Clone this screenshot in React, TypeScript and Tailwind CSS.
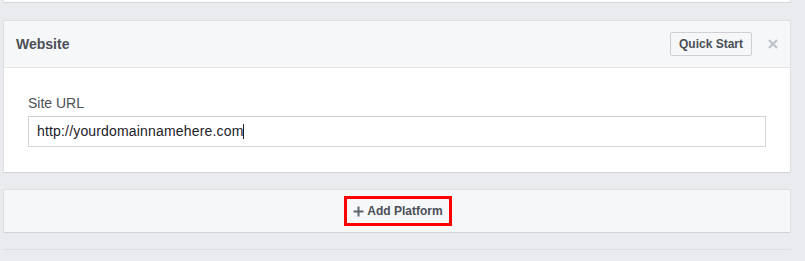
import React from "react";

export default function App() {
  return (
    <div
      className="w-[805px] h-[261px] overflow-hidden bg-[#e9ebee]"
      style={{ fontFamily: '"Liberation Sans", Arial, Helvetica, sans-serif' }}
    >
      {/* tail of previous card */}
      <div className="ml-[3px] w-[788px] h-[3px] bg-white border-x border-b border-[#dddfe2] border-b-[#d3d6db]" />

      {/* Website card */}
      <div className="ml-[3px] mt-[17px] w-[788px] border border-[#dddfe2] border-b-[#d0d1d5] rounded-[2px] bg-white">
        <div className="h-[47px] bg-[#f6f7f9] border-b border-[#e5e5e5] flex items-center pl-[12px] pr-[12px]">
          <span className="text-[14px] font-bold text-[#4b4f56] flex-1">Website</span>
          <button className="h-[24px] w-[82px] border border-[#ced0d4] rounded-[2px] bg-[#f6f7f9] text-[12px] font-bold text-[#4b4f56] flex items-center justify-center">
            Quick Start
          </button>
          <svg className="ml-[16px]" width="10" height="10" viewBox="0 0 10 10">
            <path d="M1 1 L9 9 M9 1 L1 9" stroke="#bec2c9" strokeWidth="2.2" />
          </svg>
        </div>
        <div className="px-[24px] pt-[27px] pb-[25px]">
          <div className="text-[14px] leading-[16px] text-[#4b4f56]">Site URL</div>
          <div className="mt-[5px] h-[31px] border border-[#d3d6db] border-t-[#cdd0d5] bg-white flex items-center pl-[8px]">
            <span className="text-[14px] tracking-[0.17px] text-[#1d2129]">http://yourdomainnamehere.com</span>
            <span className="w-[1px] h-[15px] bg-[#1d2129]" />
          </div>
        </div>
      </div>

      {/* Add Platform card */}
      <div className="ml-[3px] mt-[16px] w-[788px] h-[44px] border border-[#dddfe2] border-b-[#d0d1d5] rounded-[2px] bg-[#f6f7f9] flex items-center justify-center">
        <div className="ml-[2px] h-[30px] w-[108px] border-[3px] border-[#ff0000] flex items-center justify-center gap-[3px]">
          <svg width="11" height="11" viewBox="0 0 11 11">
            <path d="M5.5 0.5 V10.5 M0.5 5.5 H10.5" stroke="#606770" strokeWidth="2" />
          </svg>
          <span className="text-[12px] font-bold text-[#4b4f56]">Add Platform</span>
        </div>
      </div>

      {/* next card top */}
      <div className="ml-[3px] mt-[16px] w-[788px] h-[20px] border-t border-[#dddfe2] bg-[#e9ebee]" />
    </div>
  );
}
